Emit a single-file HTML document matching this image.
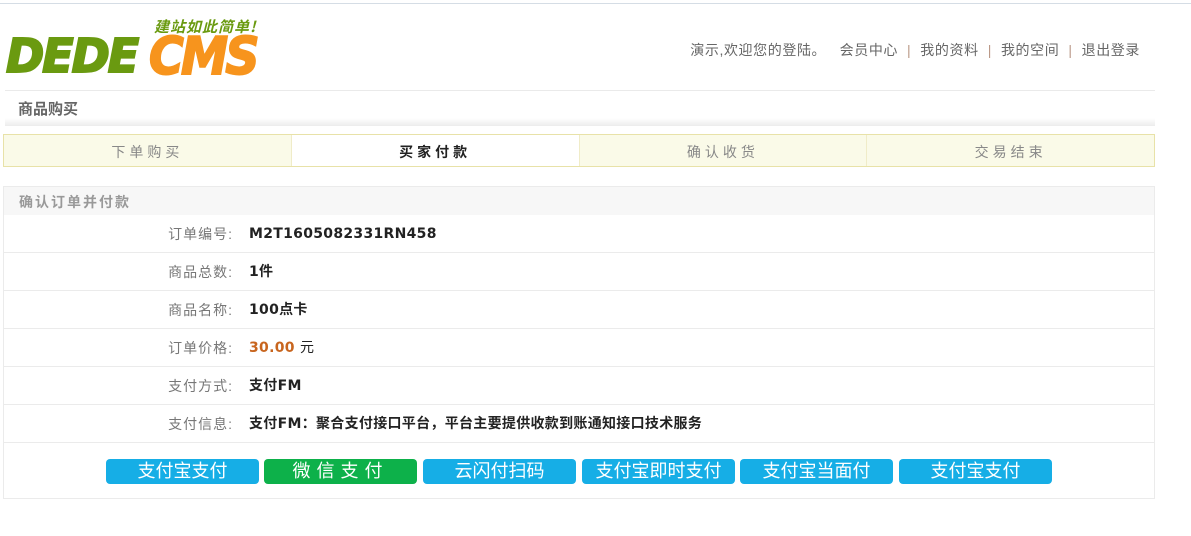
<!DOCTYPE html>
<html><head><meta charset="utf-8"><style>
*{margin:0;padding:0;box-sizing:border-box}
body{width:1191px;height:536px;background:#fff;font-family:"Liberation Sans","Noto Sans CJK SC",sans-serif;font-size:13px;color:#333;position:relative;overflow:hidden}
.abs{position:absolute}
.topline{left:0;top:3px;width:1191px;height:1px;background:#d5dde5}
.logo1{left:6px;top:28px;font:italic bold 46px "DejaVu Sans",sans-serif;color:#6a9a10;-webkit-text-stroke:2px #6a9a10;letter-spacing:-2px;transform:scaleX(1.0);transform-origin:left;line-height:56px}
.logo2{left:149px;top:26px;font:italic bold 52px "DejaVu Sans",sans-serif;color:#f7941d;-webkit-text-stroke:2px #f7941d;letter-spacing:-3px;transform:scaleX(0.91);transform-origin:left;line-height:62px}
.slogan{left:154px;top:16px;font:italic bold 15px "Noto Sans CJK SC",sans-serif;color:#6a9a10;letter-spacing:1px}
.nav{right:51px;top:40px;font-size:14px;color:#666;letter-spacing:0.6px}
.nav span.s{color:#b98;margin:0 9px}
.hline{left:5px;top:90px;width:1150px;height:1px;background:#eaeaea}
.title{left:18px;top:98px;font-weight:bold;font-size:15px;color:#666}
.band{left:5px;top:118px;width:1150px;height:8px;background:linear-gradient(#fff,#ececec)}
.tabs{left:3px;top:134px;width:1152px;height:33px;border:1px solid #e8e2a8;background:#fafae8;display:flex}
.tabs div{flex:1;text-align:center;line-height:34px;color:#888;letter-spacing:4px;font-size:14px;border-right:1px solid #f0ecc8}
.tabs div.on{background:#fff;color:#222;font-weight:bold}
.panel{left:3px;top:186px;width:1152px;height:313px;border:1px solid #ebebeb}
.ph{height:28px;background:#f7f7f7;line-height:30px;padding-left:15px;font-weight:bold;color:#999;letter-spacing:2px;font-size:14px}
.row{height:38px;border-bottom:1px solid #ebebeb;position:relative;line-height:38px}
.row .l{position:absolute;right:921px;color:#777;font-size:14px;letter-spacing:1px}
.row .v{position:absolute;left:245px;font-weight:bold;color:#222;font-family:"DejaVu Sans","Noto Sans CJK SC",sans-serif;font-size:14px;letter-spacing:0.3px}
.btn{position:absolute;top:459px;width:153px;height:25px;border-radius:4px;background:#16aee6;color:#fff;font-size:18px;text-align:center;line-height:25px}
.btn.g{background:#0db14a;letter-spacing:6px}
</style></head><body>
<div class="abs topline"></div>
<div class="abs slogan">建站如此简单!</div>
<div class="abs logo1">DEDE</div>
<div class="abs logo2">CMS</div>
<div class="abs nav">演示,欢迎您的登陆。 &nbsp;&nbsp;会员中心<span class="s">|</span>我的资料<span class="s">|</span>我的空间<span class="s">|</span>退出登录</div>
<div class="abs hline"></div>
<div class="abs title">商品购买</div>
<div class="abs band"></div>
<div class="abs tabs"><div>下单购买</div><div class="on">买家付款</div><div>确认收货</div><div style="border-right:none">交易结束</div></div>
<div class="abs panel">
<div class="ph">确认订单并付款</div>
<div class="row"><span class="l">订单编号:</span><span class="v">M2T1605082331RN458</span></div>
<div class="row"><span class="l">商品总数:</span><span class="v">1件</span></div>
<div class="row"><span class="l">商品名称:</span><span class="v">100点卡</span></div>
<div class="row"><span class="l">订单价格:</span><span class="v"><span style="color:#c8651e">30.00</span> <span style="font-weight:normal">元</span></span></div>
<div class="row"><span class="l">支付方式:</span><span class="v">支付FM</span></div>
<div class="row"><span class="l">支付信息:</span><span class="v">支付FM：聚合支付接口平台，平台主要提供收款到账通知接口技术服务</span></div>
</div>
<div class="btn" style="left:106px">支付宝支付</div>
<div class="btn g" style="left:264px">微信支付</div>
<div class="btn" style="left:423px">云闪付扫码</div>
<div class="btn" style="left:582px">支付宝即时支付</div>
<div class="btn" style="left:740px">支付宝当面付</div>
<div class="btn" style="left:899px">支付宝支付</div>
</body></html>
